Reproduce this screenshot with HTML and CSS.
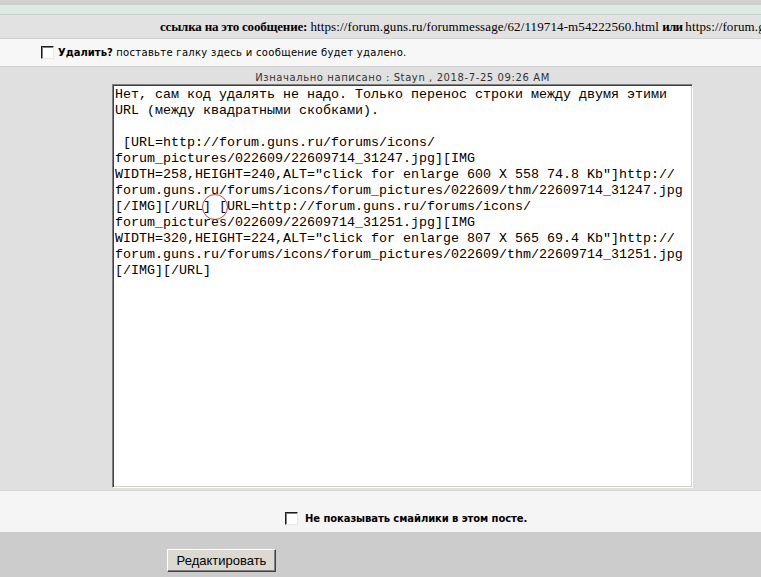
FILE: index.html
```html
<!DOCTYPE html>
<html lang="ru">
<head>
<meta charset="utf-8">
<title>Редактировать сообщение</title>
<link rel="stylesheet" href="styles.css">
</head>
<body>
<div class="topband"></div>
<div class="tealband"></div>
<div class="linkrow"><b class="lbl">ссылка на это сообщение:</b> <span class="url">https://forum.guns.ru/forummessage/62/119714-m54222560.html</span> <b class="lbl ili">или</b> <span class="url">https://forum.gu</span></div>
<div class="delrow">
  <input type="checkbox" class="cb">
  <span class="deltext"><b>Удалить?</b> поставьте галку здесь и сообщение будет удалено.</span>
</div>
<div class="postarea">
  <div class="quotehead">Изначально написано : Stayn , 2018-7-25 09:26 AM</div>
  <textarea class="editor" wrap="off">Нет, сам код удалять не надо. Только перенос строки между двумя этими
URL (между квадратными скобками).

 [URL=http://forum.guns.ru/forums/icons/
forum_pictures/022609/22609714_31247.jpg][IMG
WIDTH=258,HEIGHT=240,ALT="click for enlarge 600 X 558 74.8 Kb"]http://
forum.guns.ru/forums/icons/forum_pictures/022609/thm/22609714_31247.jpg
[/IMG][/URL] [URL=http://forum.guns.ru/forums/icons/
forum_pictures/022609/22609714_31251.jpg][IMG
WIDTH=320,HEIGHT=224,ALT="click for enlarge 807 X 565 69.4 Kb"]http://
forum.guns.ru/forums/icons/forum_pictures/022609/thm/22609714_31251.jpg
[/IMG][/URL]</textarea>
</div>
<div class="smilerow">
  <input type="checkbox" class="cb">
  <span class="smiletext">Не показывать смайлики в этом посте.</span>
</div>
<div class="btnrow">
  <button class="editbtn" type="button">Редактировать</button>
</div>
<div class="cursor-ring"></div>
</body>
</html>
```
FILE: styles.css
```css
html, body {
  margin: 0;
  padding: 0;
}
body {
  background: #cccccc;
  width: 761px;
  height: 577px;
  overflow: hidden;
  position: relative;
}
.topband {
  height: 5px;
  background: #d0d0d0;
}
.tealband {
  height: 9px;
  background: #dde9e3;
  border-bottom: 1px solid #c8cfcc;
}
.linkrow {
  height: 23px;
  line-height: 24px;
  background: #e2e2e2;
  border-bottom: 1px solid #d0d0d0;
  padding-left: 160px;
  font-family: "Liberation Serif", serif;
  font-size: 13px;
  color: #000;
  white-space: nowrap;
  overflow: hidden;
}
.linkrow .lbl {
  letter-spacing: -0.2px;
}
.linkrow .ili {
  letter-spacing: -0.8px;
}
.linkrow .url {
  letter-spacing: 0.12px;
}
.delrow {
  height: 27px;
  background: #f7f7f7;
  border-bottom: 1px solid #d0d0d0;
  display: flex;
  align-items: center;
  padding-left: 41px;
  gap: 4px;
}
.cb {
  appearance: none;
  -webkit-appearance: none;
  width: 13px;
  height: 13px;
  margin: 0;
  background: #fff;
  border: 1px solid #1c1c1c;
  border-right-color: #e8e8e8;
  border-bottom-color: #e8e8e8;
  box-shadow: inset 1px 1px 0 #808080;
  box-sizing: border-box;
}
.deltext, .smiletext, .quotehead {
  font-family: "DejaVu Sans", Verdana, sans-serif;
  font-size: 10px;
  color: #000;
}
.deltext {
  letter-spacing: 0.3px;
}
.deltext b {
  font-weight: bold;
  letter-spacing: 0;
}
.postarea {
  background: #e0e0e0;
  padding: 5px 0 2px 112px;
  border-bottom: 1px solid #d6d6d6;
}
.quotehead {
  width: 581px;
  text-align: center;
  line-height: 12px;
  color: #333;
  letter-spacing: 0.6px;
}
.editor {
  display: block;
  box-sizing: border-box;
  width: 581px;
  height: 404px;
  margin: 0;
  padding: 2px;
  border: 1px solid;
  border-color: #808080 #ffffff #ffffff #808080;
  box-shadow: inset 1px 1px 0 #404040, inset -1px -1px 0 #d4d0c8;
  background: #fff;
  font-family: "Liberation Mono", "Courier New", monospace;
  font-size: 13.333px;
  line-height: 16px;
  color: #000;
  resize: none;
  white-space: pre;
  overflow: hidden;
  outline: none;
}
.smilerow {
  height: 41px;
  background: #f5f5f5;
  display: flex;
  align-items: center;
  padding-left: 285px;
  padding-top: 13px;
  box-sizing: border-box;
  gap: 7px;
}
.smiletext {
  font-weight: bold;
  letter-spacing: -0.08px;
}
.btnrow {
  padding: 17px 0 0 167px;
}
.editbtn {
  height: 23px;
  width: 109px;
  padding: 0;
  background: #dcd9d2;
  border: 1px solid;
  border-color: #ffffff #404040 #404040 #ffffff;
  box-shadow: inset -1px -1px 0 #808080;
  font-family: "Liberation Sans", Arial, sans-serif;
  font-size: 13px;
  color: #000;
}
.cursor-ring {
  position: absolute;
  left: 202px;
  top: 194px;
  width: 26px;
  height: 26px;
  border: 1px solid rgba(150, 30, 30, 0.8);
  border-radius: 50%;
  box-sizing: border-box;
  pointer-events: none;
}
```
